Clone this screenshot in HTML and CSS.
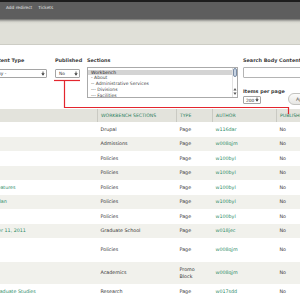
FILE: index.html
```html
<!DOCTYPE html>
<html>
<head>
<meta charset="utf-8">
<title>Workbench content</title>
<link rel="stylesheet" href="styles.css">
</head>
<body>
<div class="toolbar"><a class="tb-link">Add redirect</a><a class="tb-link">Tickets</a></div>
<div class="shortcuts"></div>
<div class="page">
  <form class="filters">
    <div class="filter f-title">
      <label class="flabel">Title</label>
      <span class="input"></span>
    </div>
    <div class="filter f-type">
      <label class="flabel">Content Type</label>
      <span class="select"><span class="sval">- Any -</span><svg class="arr" width="4" height="6" viewBox="0 0 4 6"><path d="M0.3 2.2H3.7L2 4.8Z" fill="#333"/><path d="M2 0.5V2.2" stroke="#333" stroke-width="0.8"/></svg></span>
    </div>
    <div class="filter f-pub">
      <label class="flabel">Published</label>
      <span class="select"><span class="sval">No</span><svg class="arr" width="4" height="6" viewBox="0 0 4 6"><path d="M0.3 2.2H3.7L2 4.8Z" fill="#333"/><path d="M2 0.5V2.2" stroke="#333" stroke-width="0.8"/></svg></span>
    </div>
    <div class="filter f-sec">
      <label class="flabel">Sections</label>
      <div class="listbox">
        <div class="opts">
          <div class="opt sel">Workbench</div>
          <div class="opt">- About</div>
          <div class="opt">-- Administrative Services</div>
          <div class="opt">--- Divisions</div>
          <div class="opt">--- Facilities</div>
        </div>
        <div class="sbar">
          <span class="thumb"></span>
          <span class="arrows">
            <svg width="4" height="9" viewBox="0 0 4 9"><path d="M0.4 3.4H3.6L2 1Z" fill="#555"/><path d="M0.4 5.6H3.6L2 8Z" fill="#555"/></svg>
          </span>
        </div>
      </div>
    </div>
    <div class="filter f-search">
      <label class="flabel">Search Body Content</label>
      <span class="input wide"></span>
      <div class="ipp-row">
        <div class="ipp">
          <label class="flabel">Items per page</label>
          <span class="select small"><span class="sval">200</span><svg class="arr" width="4" height="6" viewBox="0 0 4 6"><path d="M0.3 2.2H3.7L2 4.8Z" fill="#333"/><path d="M2 0.5V2.2" stroke="#333" stroke-width="0.8"/></svg></span>
        </div>
        <button class="btn" type="button">Apply</button>
      </div>
    </div>
  </form>

  <table class="results">
    <colgroup>
      <col class="w-title"><col class="w-sec"><col class="w-type"><col class="w-auth"><col class="w-pub">
    </colgroup>
    <thead>
      <tr><th>Title</th><th>Workbench Sections</th><th>Type</th><th>Author</th><th>Published</th></tr>
    </thead>
    <tbody>
      <tr><td><a class="lnk">Test Page</a></td><td>Drupal</td><td>Page</td><td><a class="lnk">w116dar</a></td><td>No</td></tr>
      <tr><td><a class="lnk">Apply Now</a></td><td>Admissions</td><td>Page</td><td><a class="lnk">w008qjm</a></td><td>No</td></tr>
      <tr><td><a class="lnk">Travel Policy</a></td><td>Policies</td><td>Page</td><td><a class="lnk">w100byl</a></td><td>No</td></tr>
      <tr><td><a class="lnk">Privacy Policy</a></td><td>Policies</td><td>Page</td><td><a class="lnk">w100byl</a></td><td>No</td></tr>
      <tr><td><a class="lnk">Student Accessibility Features</a></td><td>Policies</td><td>Page</td><td><a class="lnk">w100byl</a></td><td>No</td></tr>
      <tr><td><a class="lnk">Emergency Response Plan</a></td><td>Policies</td><td>Page</td><td><a class="lnk">w100byl</a></td><td>No</td></tr>
      <tr><td><a class="lnk">Records Policy</a></td><td>Policies</td><td>Page</td><td><a class="lnk">w100byl</a></td><td>No</td></tr>
      <tr><td><a class="lnk">Convocation - December 11, 2011</a></td><td>Graduate School</td><td>Page</td><td><a class="lnk">w018jec</a></td><td>No</td></tr>
      <tr class="tall"><td><a class="lnk">Faculty Leave<br>Policy</a></td><td>Policies</td><td>Page</td><td><a class="lnk">w008qjm</a></td><td>No</td></tr>
      <tr><td><a class="lnk">Programs</a></td><td>Academics</td><td>Promo Block</td><td><a class="lnk">w008qjm</a></td><td>No</td></tr>
      <tr><td><a class="lnk">Department of Undergraduate Studies</a></td><td>Research</td><td>Page</td><td><a class="lnk">w017sdd</a></td><td>No</td></tr>
    </tbody>
  </table>
</div>

<svg class="annot" width="300" height="300" viewBox="0 0 300 300">
  <path d="M54 80.5H80" stroke="#e3262e" stroke-width="1.2" fill="none"/>
  <path d="M64.5 80.5V107.5H288.5V114" stroke="#e3262e" stroke-width="1.2" fill="none"/>
</svg>
</body>
</html>
```
FILE: styles.css
```css
* { box-sizing: border-box; }
html, body { margin: 0; padding: 0; background: #fff; }
body {
  position: relative;
  width: 300px;
  height: 300px;
  overflow: hidden;
  font-family: "DejaVu Sans", Verdana, sans-serif;
  color: #333;
}

/* toolbar */
.toolbar {
  height: 19px;
  background: #5e5e5e;
  border-top: 2px solid #1d1d1d;
  display: flex;
  gap: 6px;
  padding: 3px 0 0 6px;
  font-size: 4.3px;
  line-height: 6px;
  color: #e4e4e4;
}
.tb-link { color: #e4e4e4; }

.shortcuts {
  height: 26px;
  background: linear-gradient(to bottom, #6c6c6a 0, #a9a9a4 1.5px, #d6d6ce 3px, #e0e0d8 5px, #e0e0d8 100%);
  border-bottom: 1px solid #cdcdc5;
}

/* page shifted as the screenshot is scrolled */
.page {
  margin-left: -60px;
  width: 400px;
}

.filters {
  display: flex;
  align-items: flex-start;
  padding: 11px 0 5px 4px;
  margin: 0;
}
.filter { display: flex; flex-direction: column; align-items: flex-start; }
.f-title { width: 36px; margin-right: 8px; }
.f-type { width: 59px; margin-right: 8px; }
.f-pub { width: 28px; margin-right: 4px; }
.f-sec { width: 151px; margin-right: 5px; }
.f-search { width: 90px; }

.flabel {
  font-size: 4.9px;
  font-weight: bold;
  line-height: 8px;
  color: #3a3a3a;
  margin-bottom: 3px;
  white-space: nowrap;
}

.input {
  display: block;
  width: 100%;
  height: 11px;
  border: 1px solid #b4b4b4;
  border-radius: 1px;
  background: #fff;
}
.input.wide { width: 80px; }

.select {
  display: flex;
  align-items: center;
  justify-content: space-between;
  width: 100%;
  height: 9px;
  margin-top: 2px;
  border: 1px solid #a5a5a5;
  border-radius: 1px;
  background: #fff;
  padding: 0 1px 0 3px;
  font-size: 4.4px;
  color: #333;
}
.f-pub .select { width: 25px; }
.select.small { width: 18px; height: 8px; margin-top: 1px; padding-left: 2px; }
.arr { flex: none; }

.listbox {
  display: flex;
  width: 151px;
  height: 31px;
  border: 1px solid #aaa;
  background: #fff;
}
.opts { flex: 1; padding-top: 1.5px; }
.opt {
  font-size: 4.5px;
  line-height: 5.8px;
  padding-left: 3px;
  color: #444;
  white-space: nowrap;
}
.opt.sel { background: #d4d4d4; color: #222; }
.sbar {
  width: 5px;
  display: flex;
  flex-direction: column;
  justify-content: space-between;
  align-items: center;
  border-left: 1px solid #e2e2e2;
  padding: 0 0 1px;
}
.thumb {
  width: 4px;
  height: 9px;
  border: 1px solid #7d8ea6;
  border-radius: 2px;
  background: #c7d3e3;
}
.arrows { display: flex; }

.ipp-row {
  display: flex;
  align-items: flex-end;
  gap: 5px;
  margin-top: 9px;
}
.ipp { display: flex; flex-direction: column; align-items: flex-start; width: 40px; }
.ipp .flabel { margin-bottom: 0; }
.btn {
  height: 12px;
  padding: 0 7px;
  border: 1px solid #c3c3c0;
  border-radius: 6px;
  background: linear-gradient(#fbfbfa, #e6e6e3);
  font-family: "DejaVu Sans", Verdana, sans-serif;
  font-size: 4.8px;
  color: #555;
  margin-bottom: -1px;
}

/* results table */
.results {
  width: 400px;
  table-layout: fixed;
  border-collapse: collapse;
}
.w-title { width: 157px; }
.w-sec { width: 79px; }
.w-type { width: 36px; }
.w-auth { width: 64px; }
.w-pub { width: 64px; }

.results th {
  height: 13px;
  padding: 0 3.5px;
  background: #e3e3dc;
  border-left: 1px solid #cacac3;
  text-align: left;
  text-transform: uppercase;
  font-weight: normal;
  font-size: 4.6px;
  color: #2c7f5d;
  white-space: nowrap;
  overflow: hidden;
}
.results th:first-child { border-left: none; }

.results td {
  padding: 3.5px 3.5px;
  line-height: 7.5px;
  font-size: 4.8px;
  color: #333;
  vertical-align: middle;
  white-space: normal;
}
.results tbody tr:nth-child(even) td { background: #f1f1ec; }
.results tr.tall td { padding-top: 4.5px; padding-bottom: 4.5px; }
.lnk { color: #2b8b66; text-decoration: none; }

.annot {
  position: absolute;
  top: 0;
  left: 0;
  pointer-events: none;
}
```
